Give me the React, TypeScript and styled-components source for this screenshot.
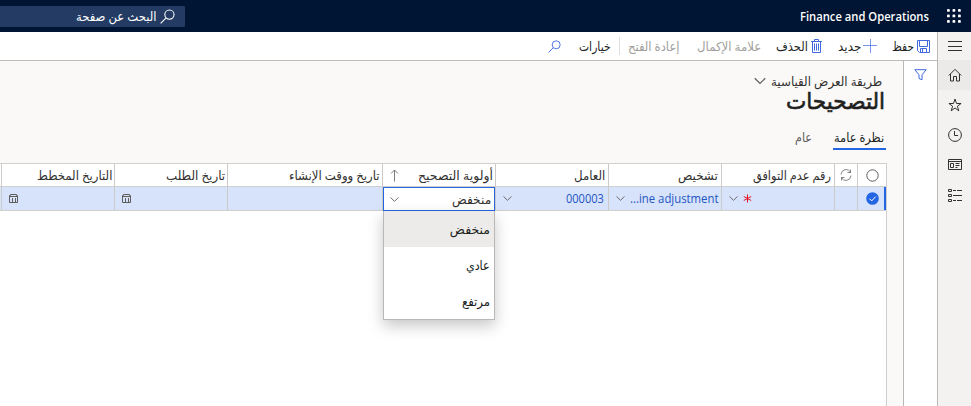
import React, { useLayoutEffect, useRef, useState } from "react";
import styled, { createGlobalStyle } from "styled-components";

const GlobalStyle = createGlobalStyle`
  * { box-sizing: border-box; }
  html, body { margin: 0; padding: 0; overflow: hidden; }
  body { font-family: "Open Sans", "Noto Sans", "DejaVu Sans", sans-serif; font-size: 12.5px; color: #323130; background: #fff; }
`;

const FitBox = styled.span<{ $w: number; $lift: number }>`
  display: flex;
  flex: none;
  width: ${(p) => p.$w}px;
  height: 16px;
  line-height: 16px;
  margin-top: ${(p) => -2 * p.$lift}px;
  white-space: nowrap;
`;
const FitInner = styled.span`
  flex: none;
  transform-origin: right center;
`;

/* Condenses a label so that it fills exactly the width given to it. */
function Fit({ w, lift = 0, dir, children }: { w: number; lift?: number; dir?: string; children: React.ReactNode }) {
  const ref = useRef<HTMLSpanElement>(null);
  const [scale, setScale] = useState(1);
  useLayoutEffect(() => {
    if (ref.current) setScale(w / ref.current.offsetWidth);
  }, [w]);
  return (
    <FitBox $w={w} $lift={lift}>
      <FitInner ref={ref} dir={dir} style={{ transform: `scaleX(${scale})` }}>{children}</FitInner>
    </FitBox>
  );
}

const Page = styled.div`
  direction: rtl;
  width: 971px;
  height: 406px;
  display: flex;
  flex-direction: column;
  overflow: hidden;
`;
const TopBar = styled.header`
  flex: none;
  height: 32px;
  background: #001433;
  color: #fff;
  display: flex;
  align-items: center;
  padding-right: 10px;
`;
const Brand = styled.div`
  margin-right: 18px;
  padding-top: 1px;
  font-size: 12px;
  font-weight: 600;
`;
const SearchBox = styled.div`
  margin-right: auto;
  width: 185px;
  height: 21px;
  background: #243c63;
  border-radius: 0 1px 1px 0;
  display: flex;
  align-items: center;
  gap: 3px;
  padding-right: 10px;
`;
const Body = styled.div`
  flex: 1;
  display: flex;
  min-height: 0;
`;
const Rail = styled.nav`
  flex: none;
  width: 34px;
  background: #f3f2f1;
  border-left: 1px solid #bab8b7;
`;
const RailItem = styled.div<{ $active?: boolean; $h?: number }>`
  height: ${(p) => p.$h ?? 30}px;
  background: ${(p) => (p.$active ? "#ebeae8" : "transparent")};
  display: flex;
  align-items: center;
  justify-content: center;
  padding-left: 1px;
  color: #323130;
`;
const Work = styled.div`
  flex: 1;
  display: flex;
  flex-direction: column;
  min-width: 0;
`;
const Toolbar = styled.div`
  flex: none;
  height: 29px;
  border-bottom: 1px solid #bebbb8;
  display: flex;
  align-items: center;
  padding-right: 7px;
  background: #fff;
`;
const Action = styled.div<{ $gap?: number; $before?: number; $disabled?: boolean }>`
  display: flex;
  align-items: center;
  gap: ${(p) => p.$gap ?? 3}px;
  margin-right: ${(p) => p.$before ?? 0}px;
  color: ${(p) => (p.$disabled ? "#a19f9d" : "#201f1e")};
`;
const Divider = styled.div`
  width: 1px;
  height: 18px;
  margin: 0 8px 0 8px;
  background: #e1dfdd;
`;
const Content = styled.div`
  flex: 1;
  display: flex;
  min-height: 0;
`;
const FilterPane = styled.aside`
  flex: none;
  width: 34px;
  border-left: 1px solid #bab8b7;
  background: #fff;
  display: flex;
  justify-content: center;
  padding-top: 8px;
`;
const Main = styled.main`
  flex: 1;
  min-width: 0;
  background: #faf9f8;
  padding-right: 16px;
  display: flex;
  flex-direction: column;
`;
const ViewPicker = styled.div`
  display: flex;
  align-items: center;
  gap: 5px;
  height: 16px;
  margin: 12px 5px 0 0;
`;
const Title = styled.h1`
  margin: 0;
  height: 26px;
  padding: 3px 2px 0 0;
  font-size: 22px;
  font-weight: 400;
  color: #201f1e;
  -webkit-text-stroke: 0.6px #201f1e;
`;
const Tabs = styled.div`
  display: flex;
  height: 35px;
  gap: 19px;
  align-items: flex-end;
`;
const Tab = styled.div<{ $selected?: boolean }>`
  height: 20px;
  padding: 0 2px 0 1px;
  margin-right: ${(p) => (p.$selected ? 1 : 0)}px;
  color: ${(p) => (p.$selected ? "#201f1e" : "#605e5c")};
  border-bottom: 2px solid ${(p) => (p.$selected ? "#2266e3" : "transparent")};
`;
const Grid = styled.div`
  flex: 1;
  margin-top: 13px;
  border-top: 1px solid #d0cfce;
  border-right: 1px solid #d0cfce;
  background: #fff;
`;
const Row = styled.div<{ $selected?: boolean }>`
  display: grid;
  grid-template-columns: 29px 23px 113px 113px 113px 113px 155px 113px 113px 2px;
  height: ${(p) => (p.$selected ? 24 : 23)}px;
  background: ${(p) => (p.$selected ? "#d7e3fb" : "#fff")};
  border-bottom: 1px solid #d0cfce;
  ${(p) => p.$selected && "box-shadow: inset -2px 0 0 #2266e3;"}
`;
const Cell = styled.div<{ $center?: boolean; $link?: boolean; $pr?: number }>`
  position: relative;
  border-left: 1px solid #cccac9;
  display: flex;
  align-items: center;
  justify-content: ${(p) => (p.$center ? "center" : "space-between")};
  padding: ${(p) => (p.$center ? "0" : `0 ${p.$pr ?? 3}px 0 7px`)};
  color: ${(p) => (p.$link ? "#1f55c0" : "#323130")};
`;
const EndCell = styled.div``;
const Combo = styled.div`
  position: absolute;
  inset: 0 0 -1px 0;
  border: 1px solid #2266e3;
  background: #fff;
  display: flex;
  align-items: center;
  justify-content: space-between;
  padding: 0 3px 0 6px;
`;
const Menu = styled.div`
  position: absolute;
  top: 24px;
  right: 0;
  left: 0;
  height: 109px;
  background: #fff;
  border: 1px solid #bab8b7;
  border-top: none;
  box-shadow: 0 6px 14px rgba(0, 0, 0, 0.22);
  z-index: 2;
`;
const Option = styled.div<{ $active?: boolean }>`
  height: 36px;
  display: flex;
  align-items: center;
  padding: 2px 4px 0 0;
  background: ${(p) => (p.$active ? "#edebe9" : "#fff")};
  color: #201f1e;
`;
const Required = styled.span`
  margin-right: 82px;
  display: flex;
`;
const Svg = styled.svg`
  display: block;
  flex: none;
  fill: none;
  stroke: currentColor;
  stroke-width: 1;
`;
const BlueSvg = styled(Svg)`
  color: #4169df;
`;
const MutedSvg = styled(Svg)`
  color: #605e5c;
`;

const Chevron = ({ w = 9 }: { w?: number }) => (
  <MutedSvg width={w} height={w} viewBox="0 0 10 10"><path d="M.6 2.700 5 7.100 9.400 2.700" /></MutedSvg>
);
const Magnifier = ({ s }: { s: number }) => (
  <Svg width={s} height={s} viewBox="0 0 14 14"><circle cx="8.800" cy="5.200" r="4.300" /><path d="M5.700 8.300.6 13.400" /></Svg>
);
const Calendar = () => (
  <MutedSvg width="9" height="9" viewBox="0 0 9 9"><path d="M1.500.5h6v1h1v7h-8v-7h1zM1 2.500h7M3.500 4v4M6.500 4v4" /></MutedSvg>
);
const Waffle = () => (
  <Svg width="14" height="14" viewBox="0 0 14 14">
    {[0, 1, 2].map((r) => [0, 1, 2].map((c) => (
      <rect key={`${r}${c}`} x={c * 5.5} y={r * 5.5} width="2.800" height="2.800" rx="0.900" fill="#fff" stroke="none" />
    )))}
  </Svg>
);

const headers: [string, number][] = [
  ["رقم عدم التوافق", 78],
  ["تشخيص", 40],
  ["العامل", 31],
  ["أولوية التصحيح", 75],
  ["تاريخ ووقت الإنشاء", 91],
  ["تاريخ الطلب", 59],
  ["التاريخ المخطط", 75],
];
const options: [string, number][] = [["منخفض", 40], ["عادي", 24], ["مرتفع", 28]];

export default function App() {
  return (
    <Page>
      <GlobalStyle />
      <TopBar>
        <Waffle />
        <Brand><Fit w={129} dir="ltr">Finance and Operations</Fit></Brand>
        <SearchBox>
          <Magnifier s={15} />
          <Fit w={81} lift={-1}>البحث عن صفحة</Fit>
        </SearchBox>
      </TopBar>
      <Body>
        <Rail>
          <RailItem $h={28}>
            <Svg width="14" height="10" viewBox="0 0 14 10"><path d="M0 .5h14M0 5.500h14M0 9.500h14" /></Svg>
          </RailItem>
          <RailItem $active>
            <Svg width="14" height="14" viewBox="0 0 14 14"><path d="M.8 7.500 7 1.300l6.200 6.200M2.500 6v7h3V8.500h3V13h3V6" /></Svg>
          </RailItem>
          <RailItem>
            <Svg width="14" height="14" viewBox="0 0 14 14"><path d="m7 1 1.500 4.500h4.600L9.400 8.200l1.400 4.600L7 10l-3.800 2.800 1.400-4.600L.9 5.500h4.600z" /></Svg>
          </RailItem>
          <RailItem>
            <Svg width="14" height="14" viewBox="0 0 14 14"><circle cx="7" cy="7" r="6.400" /><path d="M6.500 3v4.500H10" /></Svg>
          </RailItem>
          <RailItem>
            <Svg width="14" height="12" viewBox="0 0 14 12"><path d="M.5.5h13v10H.5zM.5 2.500h13M2.500 4.500h3v4h-3zM7.500 4.500h4M7.500 6.500h4M7.500 8.500h2" /></Svg>
          </RailItem>
          <RailItem>
            <Svg width="14" height="13" viewBox="0 0 14 13"><path d="M.5.5h3v2h-3zM.5 5.500h3v2h-3zM.5 10.500h3v2h-3zM5 1.500h3M9 1.500h5M5 6.500h9M5 11.500h3M9 11.500h5" /></Svg>
          </RailItem>
        </Rail>
        <Work>
          <Toolbar>
            <Action>
              <BlueSvg width="13" height="13" viewBox="0 0 13 13"><path d="M.5.5h12v12h-10l-2-2zM2.500.5v6h8v-6M3.500 12.500v-4h6v4M5.500 9v3" /></BlueSvg>
              <Fit w={22} lift={-1}>حفظ</Fit>
            </Action>
            <Action $before={15} $gap={2}>
              <BlueSvg width="14" height="14" viewBox="0 0 14 14"><path d="M7.500 0v14M0 6.500h14" opacity=".7" /></BlueSvg>
              <Fit w={23} lift={-1}>جديد</Fit>
            </Action>
            <Action $before={16}>
              <BlueSvg width="11" height="14" viewBox="0 0 11 14"><path d="M0 2.500h11M3.500 2V.5h4V2M1.500 2.500v11h8v-11M3.500 4.500v7M5.500 4.500v7M7.500 4.500v7" /></BlueSvg>
              <Fit w={32} lift={-1}>الحذف</Fit>
            </Action>
            <Action $before={15} $disabled><Fit w={64} lift={-1}>علامة الإكمال</Fit></Action>
            <Action $before={17} $disabled><Fit w={52} lift={-1}>إعادة الفتح</Fit></Action>
            <Divider />
            <Action><Fit w={32} lift={-1}>خيارات</Fit></Action>
            <Action $before={18}><BlueSvg width="13" height="13" viewBox="0 0 14 14"><circle cx="8.800" cy="5.200" r="4.300" /><path d="M5.700 8.300.6 13.400" /></BlueSvg></Action>
          </Toolbar>
          <Content>
            <FilterPane>
              <BlueSvg width="13" height="12" viewBox="0 0 13 12"><path d="M.8.700h11.400L8 5.800v5L5 9.500V5.800z" /></BlueSvg>
            </FilterPane>
            <Main>
              <ViewPicker>
                <Fit w={111} lift={-0.5}>طريقة العرض القياسية</Fit>
                <Chevron w={12} />
              </ViewPicker>
              <Title><Fit w={99}>التصحيحات</Fit></Title>
              <Tabs>
                <Tab $selected><Fit w={50}>نظرة عامة</Fit></Tab>
                <Tab><Fit w={17}>عام</Fit></Tab>
              </Tabs>
              <Grid>
                <Row>
                  <Cell $center>
                    <MutedSvg width="13" height="13" viewBox="0 0 13 13"><circle cx="6.500" cy="6.500" r="5.700" /></MutedSvg>
                  </Cell>
                  <Cell $center>
                    <MutedSvg width="12" height="12" viewBox="0 0 12 12"><path d="M1 5.500A5 5 0 0 1 10.500 3.500M11 6.500A5 5 0 0 1 1.500 8.500M10.500.5v3h-3M1.500 11.500v-3h3" opacity=".75" /></MutedSvg>
                  </Cell>
                  {headers.map(([label, w], i) => (
                    <Cell key={label} $pr={i < 3 ? 3 : 2}>
                      <Fit w={w} lift={-0.5}>{label}</Fit>
                      {i === 3 && <MutedSvg width="9" height="13" viewBox="0 0 9 13"><path d="M4.500 12.500V1M1 4.500 4.500 1 8 4.500" opacity=".8" /></MutedSvg>}
                    </Cell>
                  ))}
                  <EndCell />
                </Row>
                <Row $selected>
                  <Cell $center>
                    <Svg width="13" height="13" viewBox="0 0 13 13"><circle cx="6.500" cy="6.500" r="6.300" fill="#2266e3" stroke="none" /><path d="m3.500 6.700 2.200 2.200 4-4.300" stroke="#fff" /></Svg>
                  </Cell>
                  <Cell $center />
                  <Cell $pr={0}>
                    <Required>
                      <Svg width="9" height="9" viewBox="0 0 9 9"><path d="M4.500.5v8M.8 2.500l7.400 4M8.200 2.500l-7.400 4" stroke="#e81123" /></Svg>
                    </Required>
                    <Chevron />
                  </Cell>
                  <Cell $link><Fit w={88} dir="ltr">...ine adjustment</Fit><Chevron /></Cell>
                  <Cell $link $pr={4}><Fit w={38} dir="ltr">000003</Fit><Chevron /></Cell>
                  <Cell>
                    <Combo><Fit w={39} lift={-0.5}>منخفض</Fit><Chevron /></Combo>
                    <Menu>
                      {options.map(([label, w], i) => (
                        <Option key={label} $active={i === 0}><Fit w={w}>{label}</Fit></Option>
                      ))}
                    </Menu>
                  </Cell>
                  <Cell />
                  <Cell><span /><Calendar /></Cell>
                  <Cell><span /><Calendar /></Cell>
                  <EndCell />
                </Row>
              </Grid>
            </Main>
          </Content>
        </Work>
      </Body>
    </Page>
  );
}
